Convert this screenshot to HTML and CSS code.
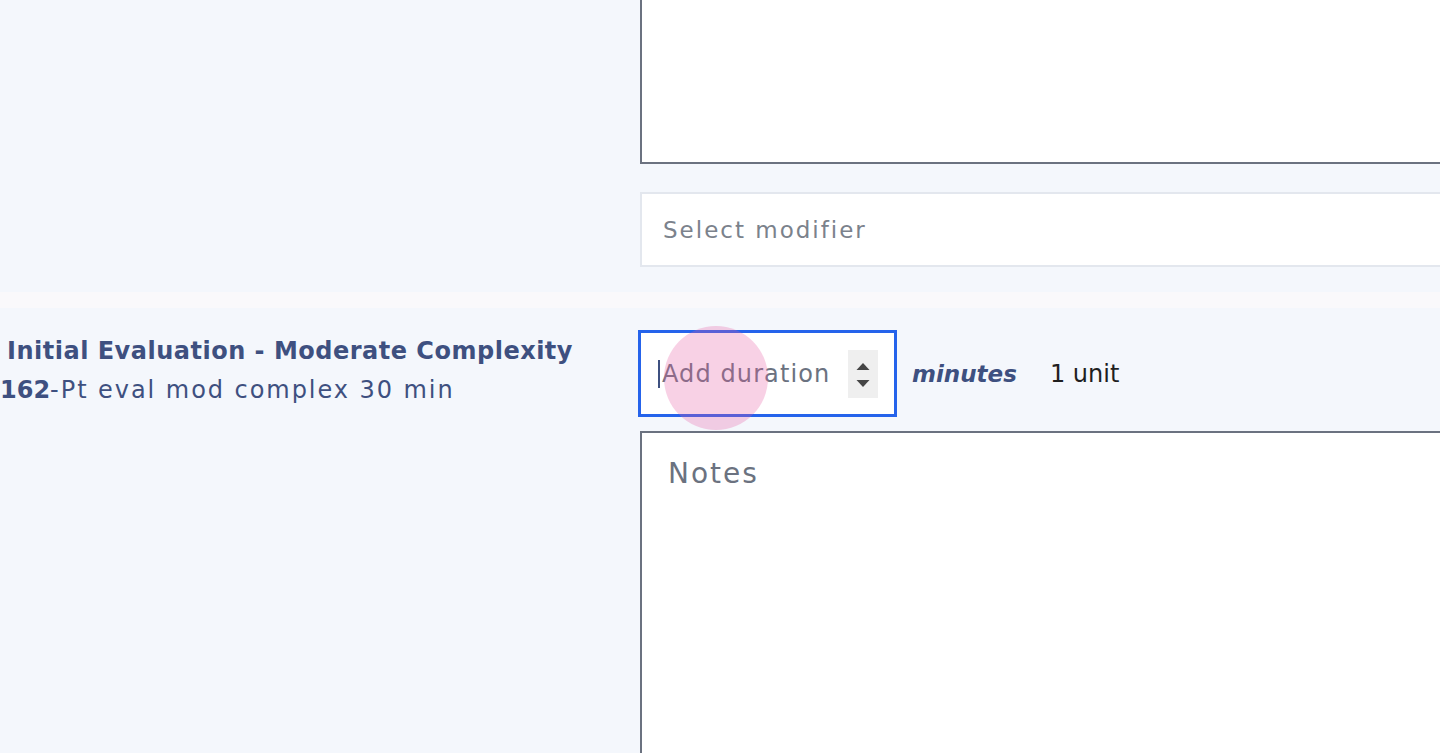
FILE: index.html
```html
<!DOCTYPE html>
<html lang="en">
<head>
<meta charset="utf-8">
<title>Procedure</title>
<link rel="stylesheet" href="styles.css">
</head>
<body>
<div class="page">
  <section class="row row-top">
    <div class="left"></div>
    <div class="right">
      <div class="textarea top-area"></div>
      <div class="select">Select modifier</div>
    </div>
  </section>
  <div class="band"></div>
  <section class="row row-item">
    <div class="left">
      <div class="title">Initial Evaluation - Moderate Complexity</div>
      <div class="code"><b>162</b>-Pt eval mod complex 30 min</div>
    </div>
    <div class="right">
      <div class="duration-line">
        <div class="duration">
          <span class="caret"></span>
          <span class="placeholder">Add duration</span>
          <span class="spinner">
            <svg width="16" height="36" viewBox="0 0 16 36"><path d="M1.5 14 L8 7 L14.5 14 Z" fill="#454545"/><path d="M1.5 24 L14.5 24 L8 31 Z" fill="#454545"/></svg>
          </span>
          <span class="tap"></span>
        </div>
        <span class="minutes">minutes</span>
        <span class="unit">1 unit</span>
      </div>
      <div class="textarea notes"><span class="notes-ph">Notes</span></div>
    </div>
  </section>
</div>
</body>
</html>
```
FILE: styles.css
```css
html, body {
  margin: 0;
  padding: 0;
  background: #f4f7fc;
  overflow: hidden;
  height: 753px;
}
body {
  font-family: "DejaVu Sans", "Liberation Sans", sans-serif;
}
.page {
  width: 1700px;
}
.row {
  display: flex;
  background: #f4f7fc;
}
.left {
  width: 640px;
  flex: none;
}
.right {
  width: 1000px;
  flex: none;
  display: flex;
  flex-direction: column;
}
.row-top {
  padding-bottom: 25px;
}
.textarea {
  background: #fff;
  border: 2px solid #6b7280;
  box-sizing: border-box;
}
.top-area {
  margin-top: -20px;
  height: 184px;
}
.select {
  margin-top: 28px;
  height: 75px;
  box-sizing: border-box;
  border: 2px solid #e3e7ee;
  background: #fff;
  display: flex;
  align-items: center;
  padding-left: 21px;
  font-size: 23px;
  letter-spacing: 2px;
  color: #7b828c;
}
.band {
  height: 16px;
  background: #faf9fb;
}
.row-item {
  padding-top: 22px;
  height: 500px;
}
.row-item .left {
  padding-top: 2px;
  box-sizing: border-box;
}
.title {
  padding-left: 7px;
  font-size: 24px;
  font-weight: 700;
  color: #3e5080;
  line-height: 38px;
  letter-spacing: 0.5px;
  white-space: nowrap;
}
.code {
  font-size: 24px;
  color: #3e5080;
  line-height: 40px;
  letter-spacing: 1.95px;
  white-space: nowrap;
}
.code b {
  font-weight: 700;
  letter-spacing: 0;
}
.duration-line {
  display: flex;
  align-items: center;
  margin-left: -2px;
}
.duration {
  position: relative;
  width: 259px;
  height: 87px;
  box-sizing: border-box;
  border: 3px solid #2563eb;
  background: #fff;
  display: flex;
  align-items: center;
  padding-left: 17px;
}
.caret {
  width: 2px;
  height: 28px;
  background: #3e5080;
  margin-right: 2px;
}
.placeholder {
  font-size: 24px;
  color: #6b7280;
  flex: 1;
  letter-spacing: 1.1px;
  white-space: nowrap;
}
.spinner {
  width: 30px;
  height: 48px;
  background: #efefef;
  display: flex;
  align-items: center;
  justify-content: center;
  margin-right: 16px;
  flex: none;
}
.tap {
  position: absolute;
  left: 23px;
  top: -7px;
  width: 104px;
  height: 104px;
  border-radius: 50%;
  background: rgba(230, 90, 160, 0.28);
  pointer-events: none;
}
.minutes {
  margin-left: 15px;
  font-size: 23px;
  font-style: italic;
  font-weight: 700;
  color: #3e5080;
}
.unit {
  margin-left: 33px;
  font-size: 24px;
  color: #1f1f1f;
}
.notes {
  margin-top: 14px;
  height: 400px;
  padding: 24px 0 0 26px;
}
.notes-ph {
  font-size: 28px;
  color: #6b7280;
  letter-spacing: 2px;
}
```
